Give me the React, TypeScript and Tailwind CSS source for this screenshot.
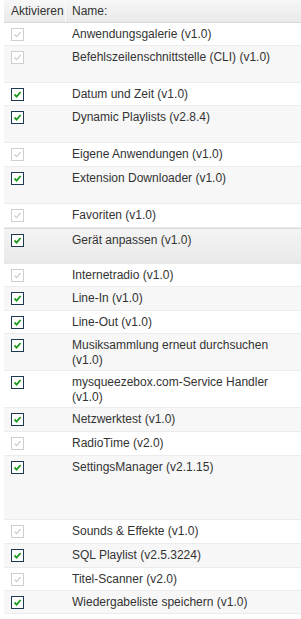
import React from "react";

type Plugin = {
  name: string;
  enabled: boolean;
  h: string;
  selected?: boolean;
};

const plugins: Plugin[] = [
  { name: "Anwendungsgalerie (v1.0)", enabled: false, h: "h-[23px]" },
  { name: "Befehlszeilenschnittstelle (CLI) (v1.0)", enabled: false, h: "h-[37px]" },
  { name: "Datum und Zeit (v1.0)", enabled: true, h: "h-[23px]" },
  { name: "Dynamic Playlists (v2.8.4)", enabled: true, h: "h-[37px]" },
  { name: "Eigene Anwendungen (v1.0)", enabled: false, h: "h-[24px]" },
  { name: "Extension Downloader (v1.0)", enabled: true, h: "h-[37px]" },
  { name: "Favoriten (v1.0)", enabled: false, h: "h-[24px]" },
  { name: "Gerät anpassen (v1.0)", enabled: true, h: "h-[36px]", selected: true },
  { name: "Internetradio (v1.0)", enabled: false, h: "h-[23px]" },
  { name: "Line-In (v1.0)", enabled: true, h: "h-[24px]" },
  { name: "Line-Out (v1.0)", enabled: true, h: "h-[23px]" },
  { name: "Musiksammlung erneut durchsuchen (v1.0)", enabled: true, h: "h-[37px]" },
  { name: "mysqueezebox.com-Service Handler (v1.0)", enabled: true, h: "h-[37px]" },
  { name: "Netzwerktest (v1.0)", enabled: true, h: "h-[24px]" },
  { name: "RadioTime (v2.0)", enabled: false, h: "h-[24px]" },
  { name: "SettingsManager (v2.1.15)", enabled: true, h: "h-[64px]" },
  { name: "Sounds & Effekte (v1.0)", enabled: false, h: "h-[24px]" },
  { name: "SQL Playlist (v2.5.3224)", enabled: true, h: "h-[24px]" },
  { name: "Titel-Scanner (v2.0)", enabled: false, h: "h-[23px]" },
  { name: "Wiedergabeliste speichern (v1.0)", enabled: true, h: "h-[23px]" },
];

function CheckBox({ enabled }: { enabled: boolean }) {
  return (
    <div
      className={
        enabled
          ? "w-[13px] h-[13px] border border-[#1e3a52] bg-white flex items-center justify-center"
          : "w-[13px] h-[13px] border border-[#cfcfcf] bg-white flex items-center justify-center"
      }
    >
      <svg width="9" height="9" viewBox="0 0 9 9">
        <path
          d="M1.5 4.5 L3.6 6.6 L7.6 2"
          fill="none"
          stroke={enabled ? "#1f9a1f" : "#cdcdcd"}
          strokeWidth={enabled ? 1.8 : 1.2}
        />
      </svg>
    </div>
  );
}

export default function App() {
  return (
    <div className="w-[301px] h-[619px] bg-white pl-[4px] font-['Liberation_Sans',Arial,sans-serif] text-[12px] text-[#333] overflow-hidden">
      {/* header */}
      <div className="flex h-[23px] bg-gradient-to-b from-[#f7f7f7] to-[#e9e9e9] border-b border-[#d6d6d6]">
        <div className="w-[62px] pl-[7px] pt-[4px] leading-[15px] border-r border-[#fbfbfb]">
          Aktivieren
        </div>
        <div className="pl-[6px] pt-[4px] leading-[15px]">Name:</div>
      </div>

      {plugins.map((p, i) => (
        <div
          key={p.name}
          className={
            p.selected
              ? `flex ${p.h} border-t border-[#d9d9d9] border-b border-b-[#e6e6e6] bg-gradient-to-b from-[#f4f4f4] to-[#e9e9e9]`
              : i % 2 === 0
              ? `flex ${p.h} border-b border-[#ececec] bg-white`
              : `flex ${p.h} border-b border-[#ececec] bg-[#f7f7f7]`
          }
        >
          <div className="w-[63px] pl-[7px] pt-[5px] shrink-0">
            <CheckBox enabled={p.enabled} />
          </div>
          <div className="pl-[5px] pr-[8px] pt-[4px] leading-[15px]">{p.name}</div>
        </div>
      ))}
    </div>
  );
}
